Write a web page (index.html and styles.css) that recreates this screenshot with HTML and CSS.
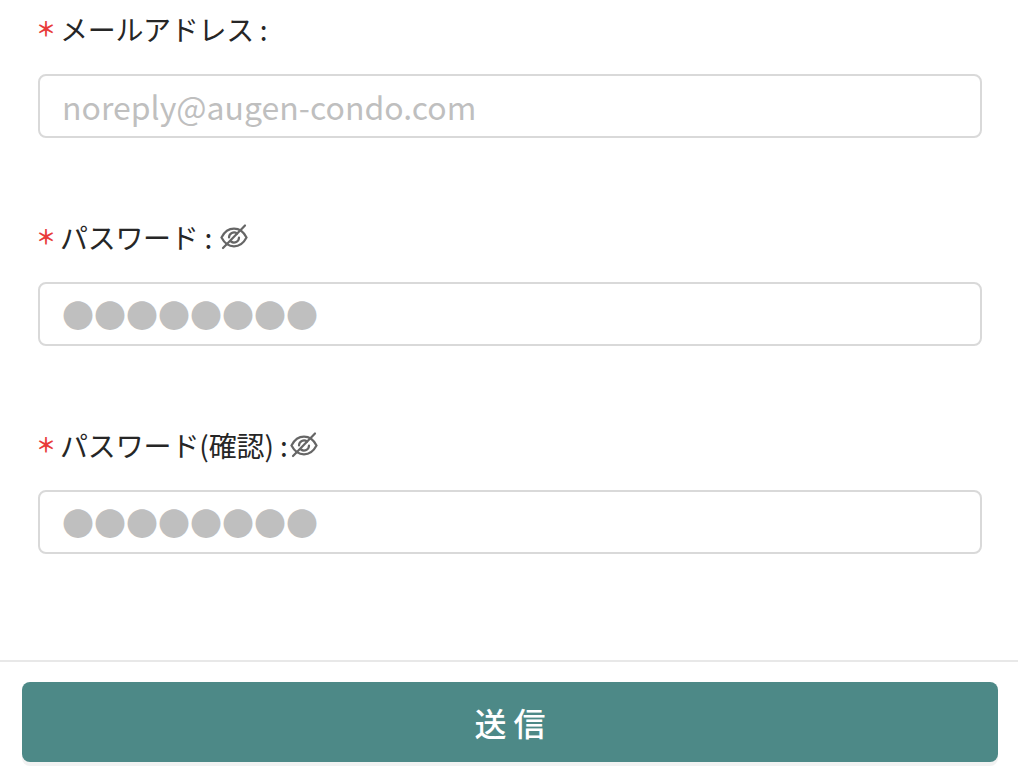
FILE: index.html
```html
<!DOCTYPE html>
<html lang="ja">
<head>
    <meta charset="utf-8">
    <title>アカウント登録</title>
    <link rel="stylesheet" href="styles.css">
</head>
<body>
    <form class="page">
        <div class="fields">
            <div class="field">
                <label class="label"><span class="required">＊</span><span>メールアドレス :</span></label>
                <input class="input" type="text" placeholder="noreply@augen-condo.com">
            </div>

            <div class="field">
                <label class="label">
                    <span class="required">＊</span><span>パスワード :</span>
                    <svg class="eye" viewBox="0 0 28 28" fill="none" stroke="#666" stroke-width="2.2" stroke-linecap="round">
                        <path d="M1.5 14.500c3-5.800 7-8.800 12.500-8.800s9.500 3 12.500 8.800c-3 5.800-7 8.800-12.500 8.800s-9.500-3-12.500-8.800z"/>
                        <path d="M9 14.500a5 5 0 0 1 8-4M19 14.500a5 5 0 0 1-8 4"/>
                        <path d="M25 2.500L3 25"/>
                    </svg>
                </label>
                <input class="input" type="text" placeholder="●●●●●●●●">
            </div>

            <div class="field">
                <label class="label label-wide">
                    <span class="required">＊</span><span>パスワード(確認) :</span>
                    <svg class="eye eye-tight" viewBox="0 0 28 28" fill="none" stroke="#666" stroke-width="2.2" stroke-linecap="round">
                        <path d="M1.5 14.500c3-5.800 7-8.800 12.500-8.800s9.500 3 12.500 8.800c-3 5.800-7 8.800-12.500 8.800s-9.500-3-12.500-8.800z"/>
                        <path d="M9 14.500a5 5 0 0 1 8-4M19 14.500a5 5 0 0 1-8 4"/>
                        <path d="M25 2.500L3 25"/>
                    </svg>
                </label>
                <input class="input" type="text" placeholder="●●●●●●●●">
            </div>
        </div>

        <footer class="actions">
            <button class="submit" type="button">送 信</button>
        </footer>
    </form>
</body>
</html>
```

FILE: styles.css
```css
* { box-sizing: border-box }

html, body { height: 100% }

body {
    margin: 0;
    background-color: white;
    color: #262626;
    font-family: "Noto Sans CJK JP", "Noto Sans", sans-serif;
    overflow: hidden;
}

.page {
    display: flex;
    flex-direction: column;
    height: 772px;
}

.fields {
    flex: 1;
    padding: 9px 36px 0 38px;
}

.field {
    height: 208px;
}

.label {
    display: flex;
    align-items: center;
    height: 40px;
    margin-bottom: 25px;
    font-size: 28px;
    line-height: 40px;
    letter-spacing: -0.3px;
    white-space: pre;
}

.label-wide { letter-spacing: -0.13px }

.required {
    width: 22px;
    margin-left: -2px;
    margin-right: 2px;
    color: #e83a3a;
    font-size: 20px;
    font-weight: 700;
    letter-spacing: 0;
}

.eye {
    width: 28px;
    height: 28px;
    margin-left: 8px;
}

.eye-tight { margin-left: 2px }

.input {
    display: block;
    width: 100%;
    height: 64px;
    padding: 0 22px;
    border: 2px solid #d9d9d9;
    border-radius: 8px;
    background-color: white;
    font-family: inherit;
    font-size: 32px;
    outline: none;
}

.input::placeholder {
    color: #bfbfbf;
    opacity: 1;
}

.actions {
    padding: 20px 20px 10px 22px;
    border-top: 2px solid #e8e8e8;
}

.submit {
    display: block;
    width: 100%;
    height: 80px;
    border: none;
    border-radius: 8px;
    background-color: #4d8987;
    box-shadow: 0 4px 0 #f2f2f2;
    color: white;
    font-family: inherit;
    font-size: 32px;
    font-weight: 500;
}
```
